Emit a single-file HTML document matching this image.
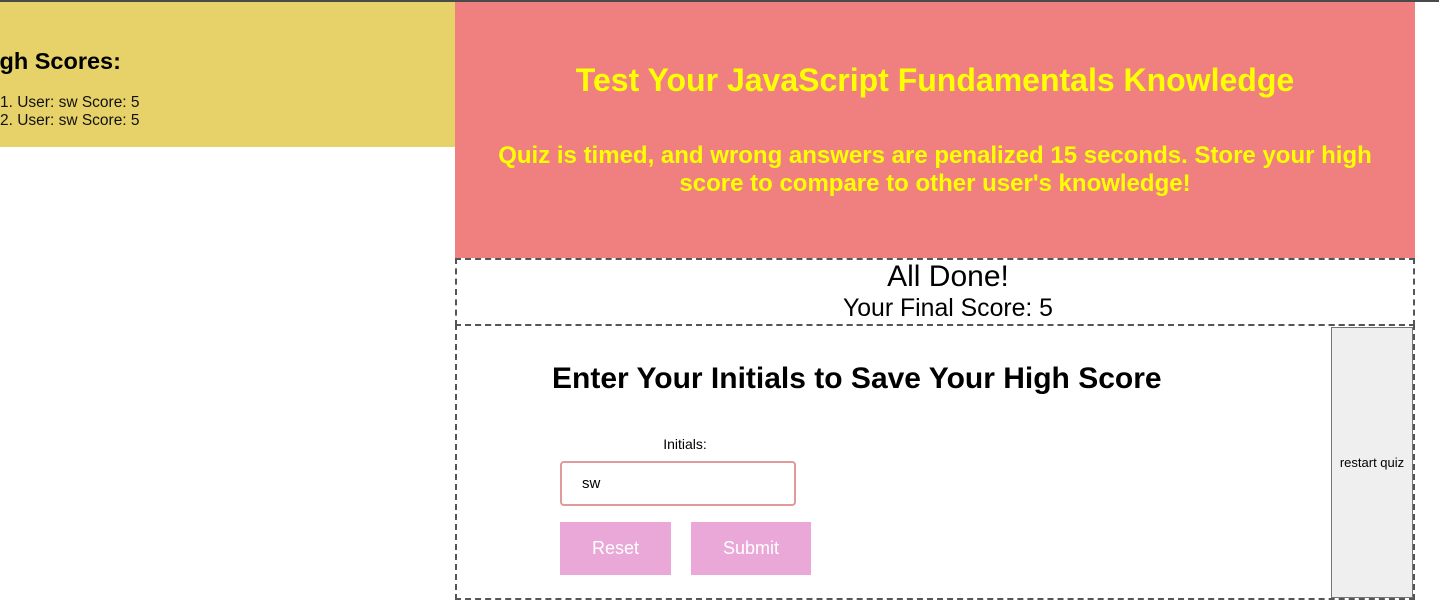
<!DOCTYPE html>
<html><head><style>
*{margin:0;padding:0;box-sizing:border-box}
body{width:1439px;height:613px;position:relative;overflow:hidden;background:#fff;font-family:"Liberation Sans",Arial,sans-serif}
.a{position:absolute}
</style></head><body>
<div class="a" style="left:0;top:0;width:1439px;height:2px;background:#4a4a4a"></div>
<div class="a" style="left:0;top:2px;width:455px;height:145px;background:#e6d268"></div>
<div class="a" style="left:-24px;top:48px;font-size:23.5px;font-weight:bold;color:#000">High Scores:</div>
<div class="a" style="left:0;top:94px;font-size:15.5px;line-height:18px;color:#111">1. User: sw Score: 5<br>2. User: sw Score: 5</div>
<div class="a" style="left:455px;top:2px;width:960px;height:256px;background:#f08080"></div>
<div class="a" style="left:455px;top:62px;width:960px;text-align:center;font-size:32px;font-weight:bold;color:#ffff00">Test Your JavaScript Fundamentals Knowledge</div>
<div class="a" style="left:480px;top:142px;width:910px;text-align:center;font-size:24px;line-height:28px;font-weight:bold;color:#ffff00">Quiz is timed, and wrong answers are penalized 15 seconds. Store your high score to compare to other user's knowledge!</div>
<div class="a" style="left:455px;top:258px;width:960px;height:68px;border:2px dashed #555"></div>
<div class="a" style="left:455px;top:260px;width:986px;text-align:center;font-size:30px;color:#000">All Done!</div>
<div class="a" style="left:455px;top:295px;width:986px;text-align:center;font-size:24.8px;color:#000">Your Final Score: 5</div>
<div class="a" style="left:455px;top:324px;width:960px;height:276px;border:2px dashed #555"></div>
<div class="a" style="left:552px;top:362px;font-size:30px;font-weight:bold;color:#000">Enter Your Initials to Save Your High Score</div>
<div class="a" style="left:560px;top:436px;width:250px;text-align:center;font-size:14px;color:#000">Initials:</div>
<div class="a" style="left:560px;top:461px;width:236px;height:45px;border:2px solid #e09a9a;border-radius:4px;background:#fff"></div>
<div class="a" style="left:582px;top:475px;font-size:15px;color:#000">sw</div>
<div class="a" style="left:560px;top:522px;width:111px;height:53px;background:#eaa8d8;color:#fff;font-size:18px;text-align:center;line-height:53px">Reset</div>
<div class="a" style="left:691px;top:522px;width:120px;height:53px;background:#eaa8d8;color:#fff;font-size:18px;text-align:center;line-height:53px">Submit</div>
<div class="a" style="left:1331px;top:327px;width:82px;height:271px;background:#efefef;border:1px solid #767676;font-size:13px;text-align:center;line-height:269px;color:#000">restart quiz</div>
</body></html>
